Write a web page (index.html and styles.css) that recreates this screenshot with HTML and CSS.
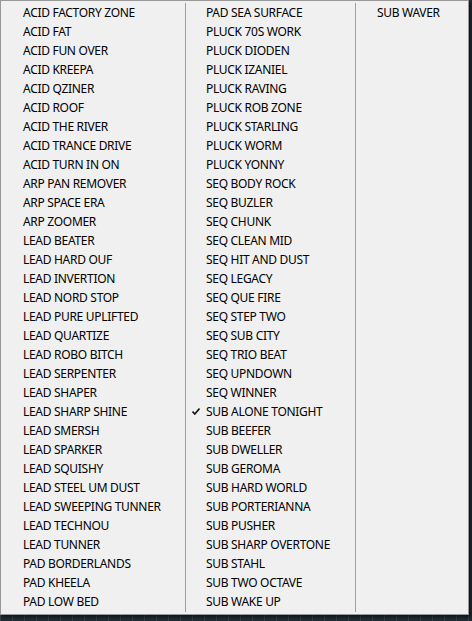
FILE: index.html
```html
<html lang="en">
<head>
    <meta charset="UTF-8">
    <meta name="viewport" content="width=device-width, initial-scale=1.0">
    <title>Presets</title>
    <link rel="stylesheet" href="styles.css">
</head>
<body>

<div class="menu">
    <div class="column col-1">
        <div class="item"><span class="mark"></span>ACID FACTORY ZONE</div>
        <div class="item"><span class="mark"></span>ACID FAT</div>
        <div class="item"><span class="mark"></span>ACID FUN OVER</div>
        <div class="item"><span class="mark"></span>ACID KREEPA</div>
        <div class="item"><span class="mark"></span>ACID QZINER</div>
        <div class="item"><span class="mark"></span>ACID ROOF</div>
        <div class="item"><span class="mark"></span>ACID THE RIVER</div>
        <div class="item"><span class="mark"></span>ACID TRANCE DRIVE</div>
        <div class="item"><span class="mark"></span>ACID TURN IN ON</div>
        <div class="item"><span class="mark"></span>ARP PAN REMOVER</div>
        <div class="item"><span class="mark"></span>ARP SPACE ERA</div>
        <div class="item"><span class="mark"></span>ARP ZOOMER</div>
        <div class="item"><span class="mark"></span>LEAD BEATER</div>
        <div class="item"><span class="mark"></span>LEAD HARD OUF</div>
        <div class="item"><span class="mark"></span>LEAD INVERTION</div>
        <div class="item"><span class="mark"></span>LEAD NORD STOP</div>
        <div class="item"><span class="mark"></span>LEAD PURE UPLIFTED</div>
        <div class="item"><span class="mark"></span>LEAD QUARTIZE</div>
        <div class="item"><span class="mark"></span>LEAD ROBO BITCH</div>
        <div class="item"><span class="mark"></span>LEAD SERPENTER</div>
        <div class="item"><span class="mark"></span>LEAD SHAPER</div>
        <div class="item"><span class="mark"></span>LEAD SHARP SHINE</div>
        <div class="item"><span class="mark"></span>LEAD SMERSH</div>
        <div class="item"><span class="mark"></span>LEAD SPARKER</div>
        <div class="item"><span class="mark"></span>LEAD SQUISHY</div>
        <div class="item"><span class="mark"></span>LEAD STEEL UM DUST</div>
        <div class="item"><span class="mark"></span>LEAD SWEEPING TUNNER</div>
        <div class="item"><span class="mark"></span>LEAD TECHNOU</div>
        <div class="item"><span class="mark"></span>LEAD TUNNER</div>
        <div class="item"><span class="mark"></span>PAD BORDERLANDS</div>
        <div class="item"><span class="mark"></span>PAD KHEELA</div>
        <div class="item"><span class="mark"></span>PAD LOW BED</div>
    </div>
    <div class="column col-2">
        <div class="item"><span class="mark"></span>PAD SEA SURFACE</div>
        <div class="item"><span class="mark"></span>PLUCK 70S WORK</div>
        <div class="item"><span class="mark"></span>PLUCK DIODEN</div>
        <div class="item"><span class="mark"></span>PLUCK IZANIEL</div>
        <div class="item"><span class="mark"></span>PLUCK RAVING</div>
        <div class="item"><span class="mark"></span>PLUCK ROB ZONE</div>
        <div class="item"><span class="mark"></span>PLUCK STARLING</div>
        <div class="item"><span class="mark"></span>PLUCK WORM</div>
        <div class="item"><span class="mark"></span>PLUCK YONNY</div>
        <div class="item"><span class="mark"></span>SEQ BODY ROCK</div>
        <div class="item"><span class="mark"></span>SEQ BUZLER</div>
        <div class="item"><span class="mark"></span>SEQ CHUNK</div>
        <div class="item"><span class="mark"></span>SEQ CLEAN MID</div>
        <div class="item"><span class="mark"></span>SEQ HIT AND DUST</div>
        <div class="item"><span class="mark"></span>SEQ LEGACY</div>
        <div class="item"><span class="mark"></span>SEQ QUE FIRE</div>
        <div class="item"><span class="mark"></span>SEQ STEP TWO</div>
        <div class="item"><span class="mark"></span>SEQ SUB CITY</div>
        <div class="item"><span class="mark"></span>SEQ TRIO BEAT</div>
        <div class="item"><span class="mark"></span>SEQ UPNDOWN</div>
        <div class="item"><span class="mark"></span>SEQ WINNER</div>
        <div class="item checked"><span class="mark"><svg width="8" height="7" viewBox="0 0 8 7"><path d="M0.5 3.5 L2.8 6 L7.5 0.5" fill="none" stroke="#111" stroke-width="1.6"/></svg></span>SUB ALONE TONIGHT</div>
        <div class="item"><span class="mark"></span>SUB BEEFER</div>
        <div class="item"><span class="mark"></span>SUB DWELLER</div>
        <div class="item"><span class="mark"></span>SUB GEROMA</div>
        <div class="item"><span class="mark"></span>SUB HARD WORLD</div>
        <div class="item"><span class="mark"></span>SUB PORTERIANNA</div>
        <div class="item"><span class="mark"></span>SUB PUSHER</div>
        <div class="item"><span class="mark"></span>SUB SHARP OVERTONE</div>
        <div class="item"><span class="mark"></span>SUB STAHL</div>
        <div class="item"><span class="mark"></span>SUB TWO OCTAVE</div>
        <div class="item"><span class="mark"></span>SUB WAKE UP</div>
    </div>
    <div class="column col-3">
        <div class="item"><span class="mark wide"></span>SUB WAVER</div>
    </div>
</div>

</body>
</html>
```

FILE: styles.css
```css
body {
    margin: 0;
    padding: 0;
    width: 472px;
    height: 621px;
    overflow: hidden;
    background-color: #1f2b32;
    background-image: repeating-linear-gradient(90deg, #33414a 0, #33414a 1px, transparent 1px, transparent 12px);
    font-family: "Noto Sans", "Open Sans", sans-serif;
    font-size: 12px;
    letter-spacing: -0.3px;
    color: #000;
}
.menu {
    display: flex;
    width: 463px;
    height: 609px;
    padding: 2px;
    background: #f0f0f0;
    border: 1px solid #979797;
    box-shadow: 2px 2px 3px rgba(0, 0, 0, 0.55);
}
.column {
    display: flex;
    flex-direction: column;
}
.col-1 {
    width: 182px;
}
.col-2 {
    width: 169px;
    border-left: 1px solid #a0a0a0;
}
.col-3 {
    flex: 1;
    border-left: 1px solid #a0a0a0;
}
.item {
    display: flex;
    align-items: center;
    height: 19px;
    white-space: nowrap;
}
.mark {
    display: flex;
    align-items: center;
    justify-content: center;
    width: 20px;
    height: 19px;
    flex-shrink: 0;
}
.mark.wide {
    width: 21px;
}
```
